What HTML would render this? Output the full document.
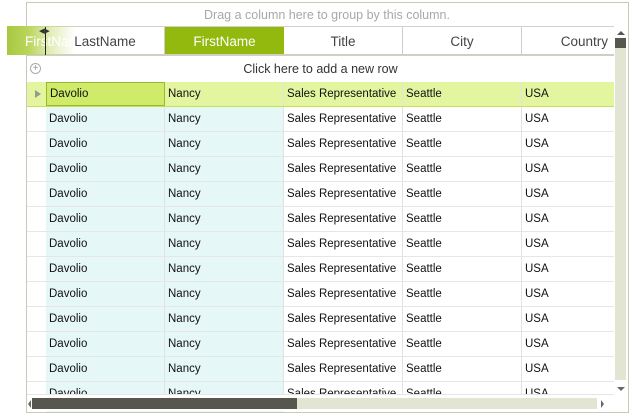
<html><head><style>
body{margin:0;width:632px;height:418px;background:#fff;font-family:"Segoe UI","Liberation Sans",sans-serif;position:relative;overflow:hidden}
.a{position:absolute}
.row{position:absolute;left:27px;width:587px;height:25px;border-bottom:1px solid #e6e6e6;box-sizing:border-box;font-size:11.5px;color:#111}
.row div{position:absolute;top:0;height:24px;line-height:25px;padding-left:3px;box-sizing:border-box;border-right:1px solid #e2e2e2;white-space:nowrap;overflow:hidden}
</style></head><body>
<div class="a" style="left:26px;top:2px;width:601px;height:409px;border:1px solid #c9c9b8"></div>
<div class="a" style="left:27px;top:3px;width:600px;height:23px;text-align:center;line-height:25px;font-size:12.5px;color:#a8a8a8">Drag a column here to group by this column.</div>
<div class="a" style="left:27px;top:26px;width:587px;height:1px;background:#d2d2c8"></div>
<div class="a" style="left:27px;top:27px;width:587px;height:29px;border-bottom:2px solid #cfcfc6;box-sizing:border-box;font-size:13.5px;color:#444">
<div class="a" style="left:19px;top:0;width:119px;height:27px;line-height:29px;text-align:center;border-right:1px solid #cfcfc6;box-sizing:border-box">LastName</div>
<div class="a" style="left:138px;top:0;width:119px;height:27px;line-height:29px;text-align:center;background:#93b90e;color:#fff">FirstName</div>
<div class="a" style="left:257px;top:0;width:119px;height:27px;line-height:29px;text-align:center;border-right:1px solid #cfcfc6;box-sizing:border-box">Title</div>
<div class="a" style="left:376px;top:0;width:119px;height:27px;line-height:29px;text-align:center;border-right:1px solid #cfcfc6;box-sizing:border-box">City</div>
<div class="a" style="left:495px;top:0;width:92px;height:27px;line-height:29px;text-align:right;padding-right:6px;box-sizing:border-box">Country</div>
</div>
<div class="a" style="left:7px;top:26px;height:29px;background:linear-gradient(90deg,#a9c840 0%,#b9d45a 30%,rgba(200,220,120,.5) 65%,rgba(255,255,255,0) 100%);color:#fff;font-size:13.5px;line-height:31px;padding-left:18px;box-sizing:border-box;overflow:hidden;white-space:nowrap;width:68px">FirstNam</div>
<div class="a" style="left:45px;top:27px;width:1px;height:28px;background:#222"></div>
<div class="a" style="left:39px;top:27px;font-size:7px;color:#333">◀▶</div>
<div class="a" style="left:27px;top:57px;width:587px;height:25px;font-size:12.5px;color:#333;text-align:center;line-height:25px">Click here to add a new row</div>
<div class="a" style="left:30px;top:63px;width:11px;height:11px;border:1px solid #aaa;border-radius:50%;box-sizing:border-box;font-size:10px;line-height:9px;text-align:center;color:#999">+</div>
<div class="a" style="left:46px;top:82px;width:238px;height:330px;background:#e6f7f8"></div>
<div id="rows"></div>
<div class="a" style="left:614px;top:27px;width:13px;height:370px;background:#fff"></div>
<div class="a" style="left:617px;top:31px;width:0;height:0;border-left:4px solid transparent;border-right:4px solid transparent;border-bottom:4px solid #555"></div>
<div class="a" style="left:615px;top:38px;width:11px;height:10px;background:#58574f"></div>
<div class="a" style="left:615px;top:48px;width:11px;height:332px;background:#e3e5d3"></div>
<div class="a" style="left:617px;top:387px;width:0;height:0;border-left:4px solid transparent;border-right:4px solid transparent;border-top:4px solid #666"></div>
<div class="a" style="left:27px;top:395px;width:600px;height:16px;background:#fff"></div>
<div class="a" style="left:28px;top:400px;width:0;height:0;border-top:4px solid transparent;border-bottom:4px solid transparent;border-right:3px solid #666"></div>
<div class="a" style="left:32px;top:398px;width:265px;height:11px;background:#58574f"></div>
<div class="a" style="left:297px;top:398px;width:300px;height:11px;background:#e3e5d3"></div>
<div class="a" style="left:601px;top:400px;width:0;height:0;border-top:4px solid transparent;border-bottom:4px solid transparent;border-left:3px solid #666"></div>
<script>
var h='';for(var i=0;i<13;i++){var t=82+i*25;var sel=i==0;
h+='<div class="row" style="top:'+t+'px;'+(sel?'background:#e4f5a0;border-bottom:1px solid #c6e05a;':'')+(i==12?'height:13px;overflow:hidden;':'')+'">'+
(sel?'<div style="left:0;width:19px;border:none"><span style="position:absolute;left:8px;top:8px;border-top:4px solid transparent;border-bottom:4px solid transparent;border-left:6px solid #9a9a8a"></span></div>':'')+
'<div style="left:19px;width:119px;'+(sel?'background:#d0eb6a;border:1px solid #9ab82e;line-height:23px;':'')+'">Davolio</div><div style="left:138px;width:119px">Nancy</div><div style="left:257px;width:119px">Sales Representative</div><div style="left:376px;width:119px">Seattle</div><div style="left:495px;width:92px;border:none">USA</div></div>';}
document.getElementById('rows').innerHTML=h;
</script>
</body></html>
